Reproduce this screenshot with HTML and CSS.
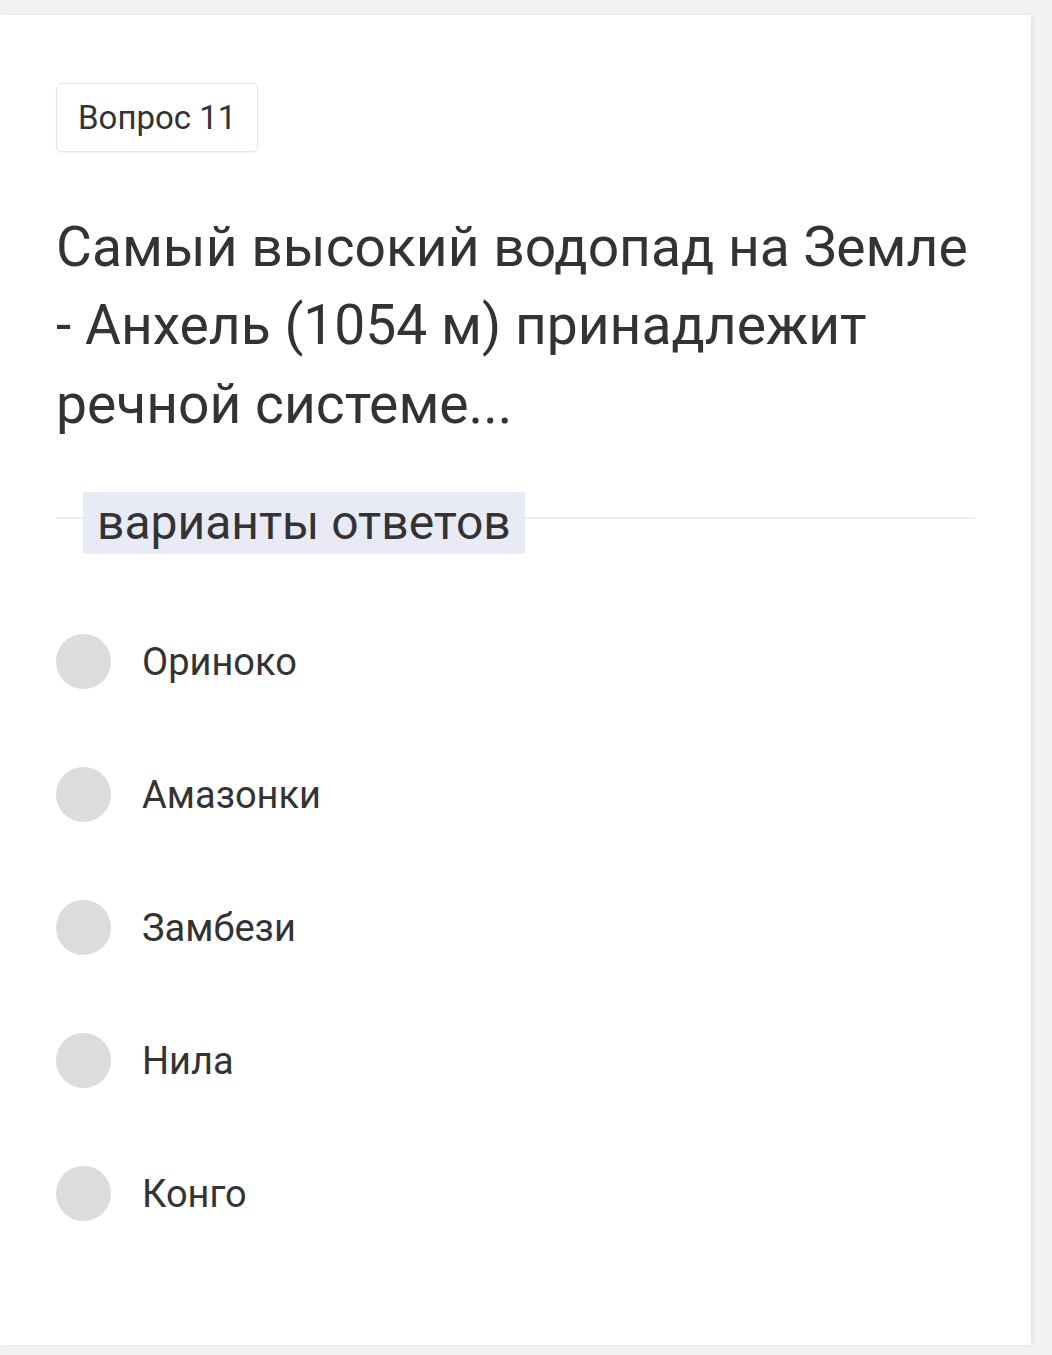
FILE: index.html
```html
<!DOCTYPE html>
<html lang="ru">
<head>
<meta charset="utf-8">
<title>Вопрос 11</title>
<link rel="stylesheet" href="styles.css">
</head>
<body>
<div class="card">
  <div class="badge">Вопрос 11</div>
  <h1 class="question">Самый высокий водопад на Земле - Анхель (1054 м) принадлежит речной системе...</h1>
  <div class="divider"><span class="divider-label">варианты ответов</span></div>
  <ul class="options">
    <li class="option"><span class="radio"></span><span class="option-text">Ориноко</span></li>
    <li class="option"><span class="radio"></span><span class="option-text">Амазонки</span></li>
    <li class="option"><span class="radio"></span><span class="option-text">Замбези</span></li>
    <li class="option"><span class="radio"></span><span class="option-text">Нила</span></li>
    <li class="option"><span class="radio"></span><span class="option-text">Конго</span></li>
  </ul>
</div>
</body>
</html>
```
FILE: styles.css
```css
html, body {
  margin: 0;
  padding: 0;
  background: #f2f2f2;
}
body {
  font-family: Roboto, "Noto Sans", Arial, sans-serif;
  color: #333333;
  padding-top: 15px;
  height: 1355px;
  box-sizing: border-box;
}
.card {
  width: 1031px;
  height: 1330px;
  box-sizing: border-box;
  background: #ffffff;
  padding: 68px 56px 0 56px;
  box-shadow: 2px 0 3px rgba(0, 0, 0, 0.06);
}
.badge {
  display: inline-block;
  font-size: 33px;
  line-height: 37px;
  padding: 15px 21px;
  border: 1px solid #e4e4e4;
  border-radius: 5px;
  box-shadow: 0 1px 2px rgba(0, 0, 0, 0.05);
}
.question {
  margin: 56px -4px 0 0;
  font-size: 55.2px;
  font-weight: 400;
  line-height: 78.4px;
  color: #333333;
}
.divider {
  margin-top: 49px;
  position: relative;
  display: flex;
  align-items: center;
  height: 62px;
}
.divider::before {
  content: "";
  position: absolute;
  left: 0;
  right: 0;
  top: 25px;
  border-top: 2px solid #eeeeee;
}
.divider-label {
  position: relative;
  margin-left: 27px;
  background: #e8eaf6;
  font-size: 48px;
  line-height: 62px;
  padding: 0 14px;
}
.options {
  list-style: none;
  margin: 41px 0 0 0;
  padding: 0;
}
.option {
  display: flex;
  align-items: center;
  gap: 31px;
  height: 133px;
}
.radio {
  width: 55px;
  height: 55px;
  border-radius: 50%;
  background: #dcdcdc;
  flex: none;
}
.option-text {
  font-size: 38px;
}
```
